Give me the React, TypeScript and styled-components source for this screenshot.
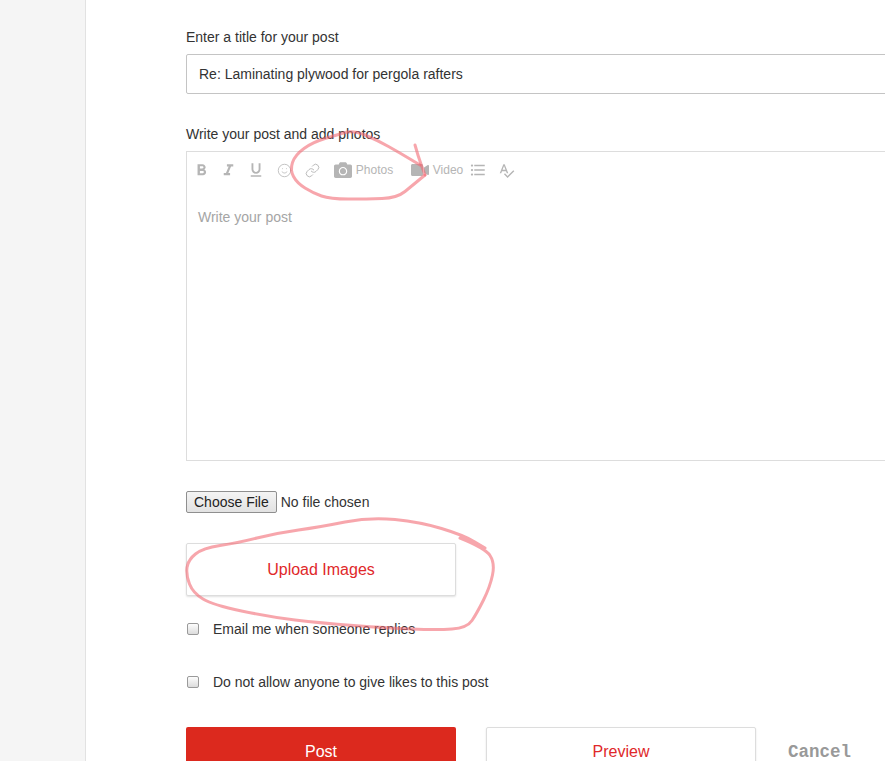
import React from "react";
import styled, { createGlobalStyle } from "styled-components";
import { FaCamera, FaVideo } from "react-icons/fa";
import { MdFormatBold, MdFormatItalic, MdFormatUnderlined, MdFormatListBulleted, MdSpellcheck } from "react-icons/md";
import { Smile, Link } from "lucide-react";

const Global = createGlobalStyle`
  html, body { margin: 0; padding: 0; height: 761px; overflow: hidden; background: #fff; }
  body { font-family: "Liberation Sans", Arial, sans-serif; font-size: 14px; color: #333; }
  * { box-sizing: border-box; }
`;

const Page = styled.div`
  position: relative;
  display: flex;
  width: 885px;
  height: 761px;
  overflow: hidden;
`;
const Gutter = styled.aside`
  flex: 0 0 86px;
  background: #f5f5f5;
  border-right: 1px solid #e2e2e2;
`;
const Main = styled.main`
  flex: 0 0 900px;
  padding: 29px 0 0 100px;
`;
const FieldLabel = styled.label`
  display: block;
  line-height: 16px;
  margin-bottom: 9px;
`;
const TitleInput = styled.input`
  display: block;
  width: 800px;
  height: 40px;
  padding: 0 12px;
  border: 1px solid #c4c4c4;
  border-radius: 2px;
  font: 14px "Liberation Sans", Arial, sans-serif;
  color: #333;
  margin-bottom: 32px;
  outline: none;
`;
const Editor = styled.div`
  width: 800px;
  height: 310px;
  border: 1px solid #ddd;
  margin-bottom: 30px;
`;
const Toolbar = styled.div`
  display: flex;
  align-items: center;
  height: 36px;
  color: #b5b5b5;
  font-size: 12px;
`;
const Tool = styled.span<{ $w: number }>`
  display: flex;
  align-items: center;
  justify-content: center;
  flex: 0 0 ${(p) => p.$w}px;
  height: 36px;
  white-space: nowrap;
`;
const ToolLabel = styled.span`
  margin-left: 4px;
`;
const Placeholder = styled.div`
  padding: 21px 11px 0;
  line-height: 16px;
  color: #a5a5a5;
`;
const FileField = styled.input`
  display: block;
  height: 22px;
  font: 14px "Liberation Sans", Arial, sans-serif;
  color: #333;
  margin-bottom: 30px;
  &::file-selector-button {
    font: 14px "Liberation Sans", Arial, sans-serif;
    color: #222;
    height: 22px;
    padding: 0 7px;
    margin-right: 4px;
    background: linear-gradient(#f4f4f4, #e2e2e2);
    border: 1px solid #8f8f8f;
    border-radius: 2px;
  }
`;
const OutlineButton = styled.button`
  display: block;
  width: 270px;
  background: #fff;
  border: 1px solid #ddd;
  border-radius: 2px;
  box-shadow: 0 1px 2px rgba(0, 0, 0, 0.12);
  color: #e0282a;
  font: 16px "Liberation Sans", Arial, sans-serif;
  padding: 0;
`;
const UploadButton = styled(OutlineButton)`
  height: 53px;
  margin-bottom: 25px;
`;
const CheckRow = styled.label<{ $after: number }>`
  display: flex;
  align-items: center;
  height: 16px;
  margin-bottom: ${(p) => p.$after}px;
`;
const Check = styled.input`
  appearance: none;
  width: 12px;
  height: 12px;
  margin: 0 14px 0 1px;
  border: 1px solid #9a9a9a;
  border-radius: 2px;
  background: linear-gradient(#fdfdfd, #dcdcdc);
`;
const Actions = styled.div`
  display: flex;
  align-items: flex-start;
  gap: 30px;
`;
const PostButton = styled.button`
  width: 270px;
  height: 50px;
  background: #dc291e;
  border: 0;
  border-radius: 2px;
  color: #fff;
  font: 16px "Liberation Sans", Arial, sans-serif;
`;
const PreviewButton = styled(OutlineButton)`
  height: 50px;
`;
const Cancel = styled.span`
  margin: 8px 0 0 2px;
  font: bold 17.5px/34px "Liberation Mono", monospace;
  color: #999;
`;
const Scribble = styled.svg`
  position: absolute;
  inset: 0;
  pointer-events: none;
`;

type P = [number, number];
const smooth = (pts: P[]) => {
  let d = `M${pts[0][0]} ${pts[0][1]}`;
  for (let i = 1; i < pts.length - 1; i++) {
    const mx = (pts[i][0] + pts[i + 1][0]) / 2;
    const my = (pts[i][1] + pts[i + 1][1]) / 2;
    d += ` Q${pts[i][0]} ${pts[i][1]} ${mx} ${my}`;
  }
  const last = pts[pts.length - 1];
  return d + ` L${last[0]} ${last[1]}`;
};

const tick: P[] = [[415, 145], [418, 156], [425, 175]];
const loopA: P[] = [[425, 175], [413, 185], [397, 198], [367, 199], [330, 199], [313, 193], [297, 183], [290, 170], [295, 155], [313, 142], [337, 135], [353, 130], [377, 140], [400, 153], [420, 165]];
const loopB: P[] = [[460, 538], [485, 548], [495, 563], [490, 587], [477, 613], [467, 628], [437, 630], [387, 628], [320, 623], [270, 617], [213, 605], [193, 593], [186, 575], [188, 560], [203, 548], [237, 543], [277, 533], [320, 527], [370, 517], [420, 522], [463, 535], [485, 548]];

export default function App() {
  return (
    <Page>
      <Global />
      <Gutter />
      <Main>
        <FieldLabel>Enter a title for your post</FieldLabel>
        <TitleInput defaultValue="Re: Laminating plywood for pergola rafters" />
        <FieldLabel>Write your post and add photos</FieldLabel>
        <Editor>
          <Toolbar>
            <Tool $w={28}><MdFormatBold size={19} /></Tool>
            <Tool $w={27}><MdFormatItalic size={19} /></Tool>
            <Tool $w={28}><MdFormatUnderlined size={18} /></Tool>
            <Tool $w={28}><Smile size={15} strokeWidth={1.3} /></Tool>
            <Tool $w={28}><Link size={15} strokeWidth={1.5} /></Tool>
            <Tool $w={75}><FaCamera size={18} /><ToolLabel>Photos</ToolLabel></Tool>
            <Tool $w={8} />
            <Tool $w={56}><FaVideo size={18} /><ToolLabel>Video</ToolLabel></Tool>
            <Tool $w={26}><MdFormatListBulleted size={18} /></Tool>
            <Tool $w={30}><MdSpellcheck size={17} /></Tool>
          </Toolbar>
          <Placeholder>Write your post</Placeholder>
        </Editor>
        <FileField type="file" />
        <UploadButton>Upload Images</UploadButton>
        <CheckRow $after={37}><Check type="checkbox" />Email me when someone replies</CheckRow>
        <CheckRow $after={37}><Check type="checkbox" />Do not allow anyone to give likes to this post</CheckRow>
        <Actions>
          <PostButton>Post</PostButton>
          <PreviewButton>Preview</PreviewButton>
          <Cancel>Cancel</Cancel>
        </Actions>
      </Main>
      <Scribble width="885" height="761" fill="none" stroke="#f26b74" strokeOpacity="0.6" strokeWidth="3" strokeLinecap="round" strokeLinejoin="round">
        <path d={smooth(tick)} />
        <path d={smooth(loopA)} />
        <path d={smooth(loopB)} />
      </Scribble>
    </Page>
  );
}
